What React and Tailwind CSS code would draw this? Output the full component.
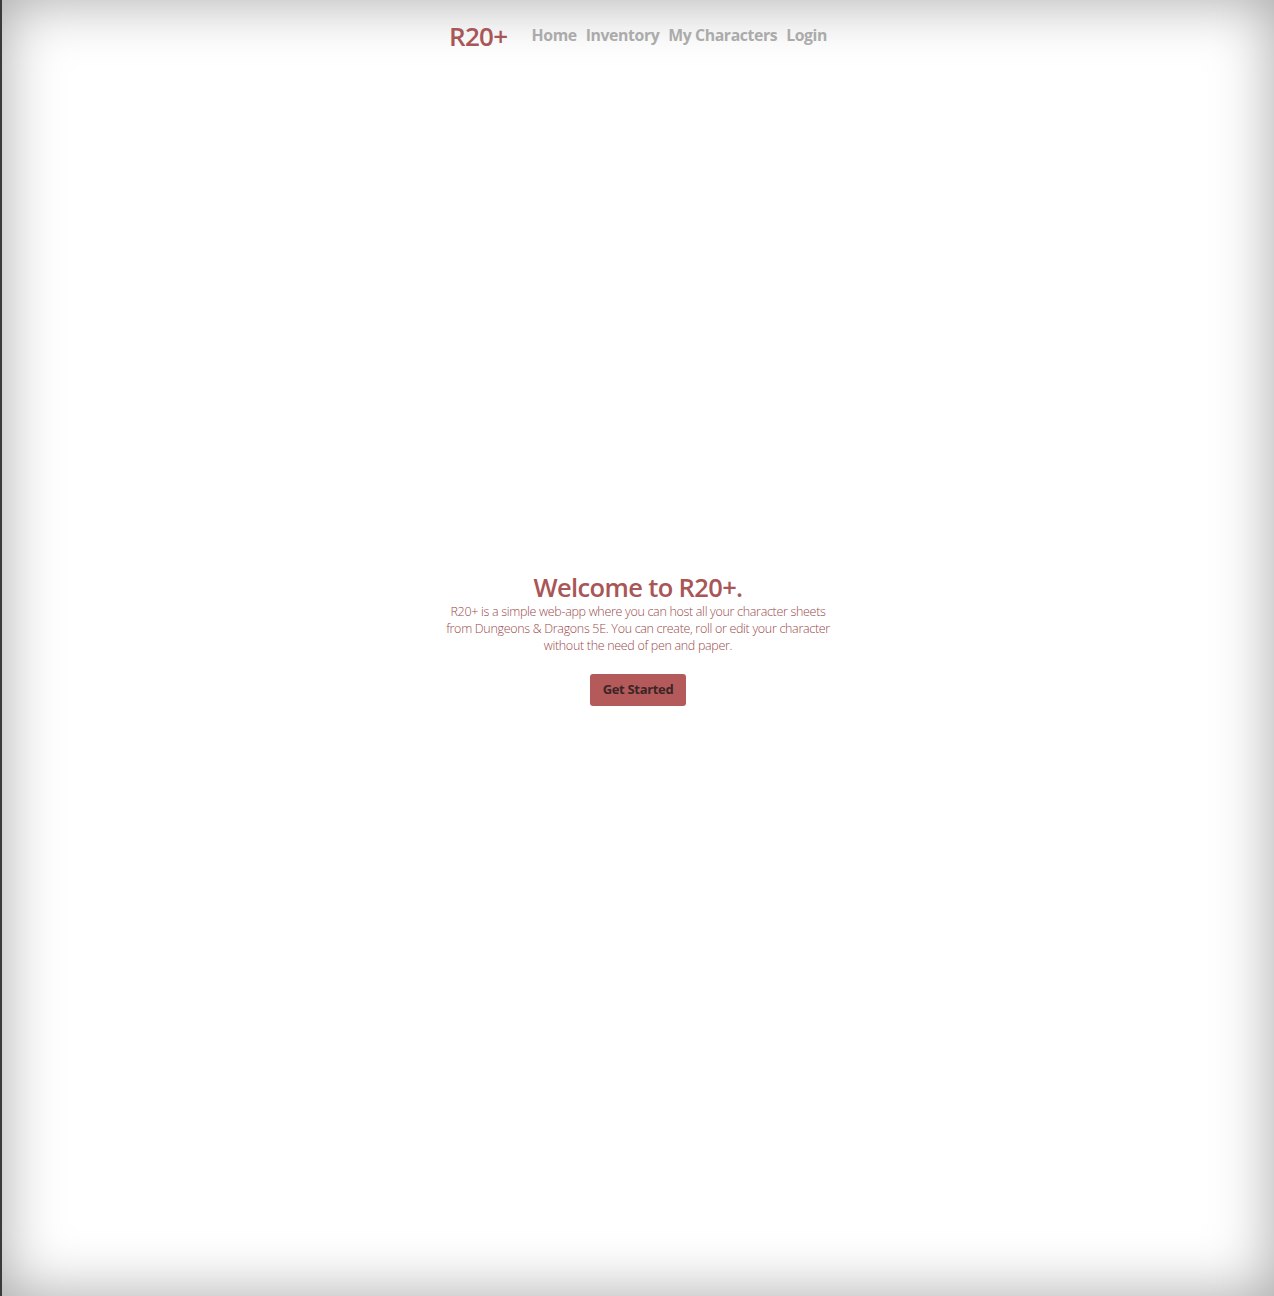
import React from "react";

const NAV_LINKS = ["Home", "Inventory", "My Characters", "Login"];

const App = () => {
  return (
    <div
      className="relative h-[1296px] w-full bg-white flex flex-col border-l-2 border-[#3a3a3a] shadow-[inset_0_0_60px_rgba(0,0,0,0.35)]"
      style={{ fontFamily: '"Open Sans", "Noto Sans", sans-serif' }}
    >
      {/* Top nav */}
      <nav className="h-[72px] flex items-center justify-center gap-6">
        <span className="text-[26px] font-semibold text-[#a85656] tracking-tight">R20+</span>
        <ul className="flex items-center gap-[9px] text-[15.8px] font-bold text-[#ababab] tracking-tight">
          {NAV_LINKS.map((link) => (
            <li key={link}>{link}</li>
          ))}
        </ul>
      </nav>

      {/* Hero */}
      <main className="flex-1 flex flex-col items-center justify-center text-center">
        <h1 className="text-[25.5px] font-semibold text-[#a85656] leading-8 tracking-tight">Welcome to R20+.</h1>
        <p className="w-[390px] text-[12.5px] font-light leading-[17px] text-[#9a4a4a] tracking-tight">
          R20+ is a simple web-app where you can host all your character sheets from Dungeons &amp; Dragons 5E. You can
          create, roll or edit your character without the need of pen and paper.
        </p>
        <button className="mt-5 bg-[#b55a5a] text-[#3a2626] text-[13px] font-bold px-[13px] h-8 rounded-[3px] tracking-tight">
          Get Started
        </button>
      </main>

      <div className="h-[92px]" />
    </div>
  );
};

export default App;
